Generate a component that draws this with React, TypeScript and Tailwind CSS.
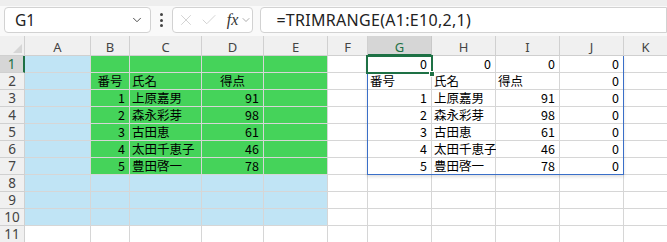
import React from "react";
import { X, Check, ChevronDown } from "lucide-react";

const COLS = ["A", "B", "C", "D", "E", "F", "G", "H", "I", "J", "K"];

type Align = "l" | "r" | "c";
type CellVal = { t: string; a: Align };

const names = [
  ["1", "上原嘉男", "91"],
  ["2", "森永彩芽", "98"],
  ["3", "古田恵", "61"],
  ["4", "太田千恵子", "46"],
  ["5", "豊田啓一", "78"],
];

function cellValue(r: number, c: number): CellVal | null {
  if (r === 1) {
    if (c >= 6 && c <= 9) return { t: "0", a: "r" };
    return null;
  }
  if (r === 2) {
    if (c === 1) return { t: "番号", a: "c" };
    if (c === 2) return { t: "氏名", a: "l" };
    if (c === 3) return { t: "得点", a: "c" };
    if (c === 6) return { t: "番号", a: "l" };
    if (c === 7) return { t: "氏名", a: "l" };
    if (c === 8) return { t: "得点", a: "l" };
    if (c === 9) return { t: "0", a: "r" };
    return null;
  }
  if (r >= 3 && r <= 7) {
    const d = names[r - 3];
    if (c === 1 || c === 6) return { t: d[0], a: "r" };
    if (c === 2 || c === 7) return { t: d[1], a: "l" };
    if (c === 3 || c === 8) return { t: d[2], a: "r" };
    if (c === 9) return { t: "0", a: "r" };
  }
  return null;
}

function bgFor(r: number, c: number): string {
  if (r <= 10 && c === 0) return "bg-[#c0e4f5]";
  if (r <= 7 && c >= 1 && c <= 4) return "bg-[#45d35a]";
  if (r >= 8 && r <= 10 && c >= 1 && c <= 4) return "bg-[#c0e4f5]";
  return "bg-white";
}

const alignCls: Record<Align, string> = {
  l: "justify-start pl-[2px]",
  r: "justify-end pr-[4px]",
  c: "justify-center",
};

export default function App() {
  const rows = Array.from({ length: 11 }, (_, i) => i + 1);
  return (
    <div className="w-[667px] h-[242px] overflow-hidden bg-white relative font-['Noto_Sans','Noto_Sans_CJK_JP',sans-serif]">
      <div className="h-[6px] bg-[#eeeeee]" />
      <div className="h-[30px] bg-[#f9f9f9] flex items-start pt-[1px]">
        <div className="ml-[4px] w-[151px] h-[26px] rounded-[4px] border border-[#d2d2d2] bg-white flex items-center pl-[10px] pr-[6px]">
          <span className="text-[15.5px] text-[#222] flex-1 leading-[20px]">G1</span>
          <ChevronDown size={14} strokeWidth={1.6} className="text-[#444]" />
        </div>
        <div className="w-[22px] h-[26px] flex flex-col items-center justify-center gap-[2.5px]">
          <div className="w-[3px] h-[3px] rounded-full bg-[#444]" />
          <div className="w-[3px] h-[3px] rounded-full bg-[#444]" />
          <div className="w-[3px] h-[3px] rounded-full bg-[#444]" />
        </div>
        <div className="w-[84px] h-[26px] rounded-[4px] border border-[#d2d2d2] bg-white flex items-center pl-[4px]">
          <X size={18} strokeWidth={1} className="text-[#c4c4c4]" />
          <Check size={18} strokeWidth={1} className="text-[#c4c4c4] ml-[5px]" />
          <span className="ml-[9px] text-[16px] italic text-[#333] font-['Liberation_Serif',serif] leading-[20px]">fx</span>
          <ChevronDown size={12} strokeWidth={1.4} className="text-[#888] ml-[2px]" />
        </div>
        <div className="ml-[7px] w-[420px] h-[26px] rounded-l-[4px] border border-[#d2d2d2] bg-white flex items-center pl-[15px]">
          <span className="text-[16px] text-[#222] leading-[20px] tracking-[0.3px]">=TRIMRANGE(A1:E10,2,1)</span>
        </div>
      </div>

      <div className="relative">
        <div className="grid grid-cols-[25px_66px_39px_72px_62px_64px_40px_64px_64px_64px_64px_44px] grid-rows-[20px_repeat(11,17px)]">
          <div className="bg-[#f0f0f0] border-r border-b border-[#d0d0d0] relative">
            <div className="absolute right-[2px] bottom-[2px] w-0 h-0 border-l-[9px] border-l-transparent border-b-[9px] border-b-[#d6d6d6]" />
          </div>
          {COLS.map((l, i) => (
            <div
              key={l}
              className={
                i === 6
                  ? "bg-[#d6d6d6] border-r border-[#c8c8c8] border-b-2 border-b-[#1e7145] flex items-center justify-center pt-[3px] text-[13px] leading-[16px] text-[#1e7145]"
                  : "bg-[#f0f0f0] border-r border-b border-[#d0d0d0] flex items-center justify-center pt-[3px] text-[13px] leading-[16px] text-[#444]"
              }
            >
              {l}
            </div>
          ))}
          {rows.map((r) => (
            <React.Fragment key={r}>
              <div
                className={
                  r === 1
                    ? "bg-[#d6d6d6] border-b border-[#d0d0d0] border-r-2 border-r-[#1e7145] flex items-center justify-center text-[13.5px] leading-[16px] text-[#1e7145]"
                    : "bg-[#f0f0f0] border-r border-b border-[#d0d0d0] flex items-center justify-center text-[13.5px] leading-[16px] text-[#444]"
                }
              >
                {r}
              </div>
              {COLS.map((_, c) => {
                const v = cellValue(r, c);
                return (
                  <div
                    key={c}
                    className={`${bgFor(r, c)} border-r border-b border-[#d6d6d6] flex items-center whitespace-nowrap text-[12.5px] text-black font-['Noto_Sans_CJK_JP',sans-serif] leading-[16px] ${v ? alignCls[v.a] : ""}`}
                  >
                    {v ? v.t : null}
                  </div>
                );
              })}
            </React.Fragment>
          ))}
        </div>

        <div className="absolute left-[367px] top-[20px] w-[257px] h-[119px] border-l border-r border-b border-[#3a6fc8] shadow-[0_2px_3px_rgba(0,0,0,0.12)]" />
        <div className="absolute left-[366px] top-[19px] w-[67px] h-[19px] border-2 border-[#1e7145]" />
        <div className="absolute left-[429px] top-[35px] w-[6px] h-[6px] bg-[#1e7145] border border-white" />
      </div>
    </div>
  );
}
